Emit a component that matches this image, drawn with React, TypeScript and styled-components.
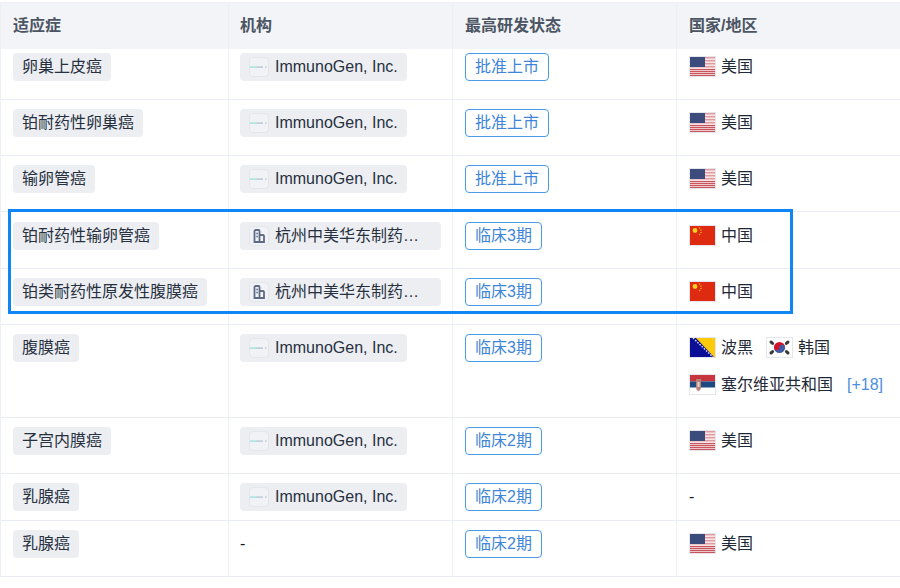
import React from "react";
import styled, { createGlobalStyle } from "styled-components";

const Global = createGlobalStyle`
  html, body { margin: 0; padding: 0; background: #fff; }
  body { font-family: "Liberation Sans", "Noto Sans CJK SC", sans-serif; font-size: 16px; color: #1f2937; }
`;
const Page = styled.div`
  position: relative;
  width: 900px;
  height: 588px;
  padding-top: 2px;
  box-sizing: border-box;
  overflow: hidden;
`;
const Table = styled.table`
  width: 900px;
  table-layout: fixed;
  border-collapse: collapse;
  border-spacing: 0;
`;
const HeadCell = styled.th`
  height: 46px;
  padding: 0 12px;
  box-sizing: border-box;
  background: #f3f4f7;
  border-top: 1px solid #eef0f5;
  border-left: 1px solid #edeff4;
  font-size: 16px;
  font-weight: 700;
  text-align: left;
  color: #4b5563;
  line-height: 22px;
`;
const OrgHead = styled(HeadCell)`
  padding-left: 11px;
`;
const Row = styled.tr<{ $tall?: boolean }>`
  border-bottom: 1px solid #eaecf3;
  &:first-child td { padding-top: 4px; }
  td { padding-top: ${(p) => (p.$tall ? "10px" : "9px")}; }
`;
const Cell = styled.td`
  padding: 9px 12px 9px;
  box-sizing: border-box;
  vertical-align: top;
  border-left: 1px solid #edeff6;
  line-height: 28px;
  color: #111827;
`;
const OrgCell = styled(Cell)`
  padding-left: 11px;
`;
const Tag = styled.span`
  display: inline-flex;
  align-items: center;
  height: 28px;
  padding: 0 9px;
  background: #eceef2;
  border-radius: 4px;
  color: #27303f;
  white-space: nowrap;
  vertical-align: top;
`;
const OrgTag = styled(Tag)<{ $long: boolean }>`
  width: ${(p) => (p.$long ? "201px" : "auto")};
  box-sizing: border-box;
  gap: 6px;
`;
const LogoBox = styled.span`
  flex: none;
  display: flex;
  align-items: center;
  justify-content: center;
  width: 20px;
  height: 20px;
  box-sizing: border-box;
  border: 1px solid #e4e6ec;
  border-radius: 4px;
  background: #f1f2f5;
`;
const Status = styled.span`
  display: inline-flex;
  align-items: center;
  height: 28px;
  box-sizing: border-box;
  padding: 0 9px;
  border: 1px solid #4a9be6;
  border-radius: 4px;
  color: #3f86d8;
  white-space: nowrap;
  vertical-align: top;
`;
const Countries = styled.div`
  display: flex;
  flex-wrap: wrap;
  column-gap: 13px;
  row-gap: 9px;
  margin-bottom: 9px;
`;
const Country = styled.span`
  display: inline-flex;
  align-items: center;
  height: 28px;
  gap: 5px;
  color: #1f2937;
  white-space: nowrap;
`;
const More = styled.span`
  margin-left: 1px;
  color: #4a8fe0;
  line-height: 28px;
`;
const FlagBox = styled.svg`
  flex: none;
  display: block;
  width: 27px;
  height: 21px;
`;
const Highlight = styled.div`
  position: absolute;
  left: 8px;
  top: 209px;
  width: 785px;
  height: 105px;
  box-sizing: border-box;
  border: 3px solid #0f86f5;
  pointer-events: none;
`;

const frame = <rect x="0.5" y="0.5" width="26" height="20" fill="none" stroke="#e4e6ec" />;

const US = () => (
  <FlagBox viewBox="0 0 27 21">
    <rect x="1" y="1" width="25" height="19" fill="#f7e3e3" />
    {[1, 4, 7, 10, 13, 15, 17, 19].map((y, i) => (
      <rect key={y} x="1" y={y} width="25" height={i > 3 ? 1.2 : 1.4} fill={i > 3 ? "#c9565e" : "#e09ba0"} />
    ))}
    <rect x="1" y="1" width="15" height="10" fill="#3b4c7c" />
    {frame}
  </FlagBox>
);
const CN = () => (
  <FlagBox viewBox="0 0 27 21">
    <rect x="1" y="1" width="25" height="19" fill="#de2a10" />
    <circle cx="6" cy="5.5" r="2.4" fill="#f8d020" />
    <circle cx="10.5" cy="3" r=".8" fill="#f3a818" />
    <circle cx="12" cy="5" r=".8" fill="#f3a818" />
    <circle cx="12" cy="7.5" r=".8" fill="#f3a818" />
    <circle cx="10.5" cy="9.5" r=".8" fill="#f3a818" />
    {frame}
  </FlagBox>
);
const BA = () => (
  <FlagBox viewBox="0 0 27 21">
    <rect x="1" y="1" width="25" height="19" fill="#0a0f96" />
    <path d="M7 1H26V20H25Z" fill="#fdcb0a" />
    <path d="M4 1L24 20" stroke="#dfe2f5" strokeWidth="1.4" strokeDasharray="1.6 1.4" />
    {frame}
  </FlagBox>
);
const KR = () => (
  <FlagBox viewBox="0 0 27 21">
    <rect x="1" y="1" width="25" height="19" fill="#fff" />
    <path d="M8 10.5a5.5 5.5 0 0 1 11 0Z" fill="#cf142b" />
    <path d="M8 10.5a5.5 5.5 0 0 0 11 0Z" fill="#3e5ba6" />
    <circle cx="10.750" cy="10.5" r="2.750" fill="#cf142b" />
    <circle cx="16.250" cy="10.5" r="2.750" fill="#3e5ba6" />
    <g stroke="#3a3a3a" strokeWidth="3" strokeLinecap="round">
      <path d="M5 5l1.6 1.4" />
      <path d="M22 5l-1.6 1.4" />
      <path d="M5 16l1.6-1.4" />
      <path d="M22 16l-1.6-1.4" />
    </g>
    {frame}
  </FlagBox>
);
const RS = () => (
  <FlagBox viewBox="0 0 27 21">
    <rect x="1" y="1" width="25" height="6.4" fill="#c6363c" />
    <rect x="1" y="7.4" width="25" height="6.3" fill="#1f4a80" />
    <rect x="1" y="13.7" width="25" height="6.3" fill="#fff" />
    <path d="M7 5h5v8q0 3-2.500 4q-2.500-1-2.500-4Z" fill="#b8827c" />
    <rect x="8.500" y="8" width="2" height="5" fill="#e8d4c8" />
    {frame}
  </FlagBox>
);

const flags: Record<string, React.FC> = { 美国: US, 中国: CN, 波黑: BA, 韩国: KR, 塞尔维亚共和国: RS };

const ImmunoLogo = () => (
  <LogoBox>
    <svg width="18" height="4" viewBox="0 0 18 4">
      <rect x="0" y="1.500" width="6" height="1.200" fill="#8fe0dc" />
      <rect x="6" y="1.500" width="7" height="1.200" fill="#aebfc9" />
      <rect x="15" y="1.500" width="1.500" height="1.200" fill="#b4c4cc" />
    </svg>
  </LogoBox>
);
const BuildingLogo = () => (
  <LogoBox>
    <svg width="12" height="14" viewBox="0 0 12 14" fill="none" stroke="#5d6b85" strokeWidth="1.800">
      <path d="M1.500 13V2a1 1 0 0 1 1-1h3a1 1 0 0 1 1 1v11Z" />
      <path d="M6.500 6H10a1 1 0 0 1 1 1v6H1.500" />
      <path d="M3.300 4.500h1.600M3.300 7.500h1.600" strokeWidth="1.300" />
    </svg>
  </LogoBox>
);

const Org = ({ name }: { name: string }) => {
  if (!name) return <>-</>;
  const isImmuno = name.startsWith("Immuno");
  return (
    <OrgTag $long={!isImmuno}>
      {isImmuno ? <ImmunoLogo /> : <BuildingLogo />}
      {name}
    </OrgTag>
  );
};

const IG = "ImmunoGen, Inc.";
const HZ = "杭州中美华东制药…";

const rows: { ind: string; org: string; status: string; lines: string[][]; more?: string }[] = [
  { ind: "卵巢上皮癌", org: IG, status: "批准上市", lines: [["美国"]] },
  { ind: "铂耐药性卵巢癌", org: IG, status: "批准上市", lines: [["美国"]] },
  { ind: "输卵管癌", org: IG, status: "批准上市", lines: [["美国"]] },
  { ind: "铂耐药性输卵管癌", org: HZ, status: "临床3期", lines: [["中国"]] },
  { ind: "铂类耐药性原发性腹膜癌", org: HZ, status: "临床3期", lines: [["中国"]] },
  { ind: "腹膜癌", org: IG, status: "临床3期", lines: [["波黑", "韩国"], ["塞尔维亚共和国"]], more: "[+18]" },
  { ind: "子宫内膜癌", org: IG, status: "临床2期", lines: [["美国"]] },
  { ind: "乳腺癌", org: IG, status: "临床2期", lines: [] },
  { ind: "乳腺癌", org: "", status: "临床2期", lines: [["美国"]] },
];

export default function App() {
  return (
    <Page>
      <Global />
      <Table>
        <colgroup>
          <col style={{ width: 228 }} />
          <col style={{ width: 224 }} />
          <col style={{ width: 224 }} />
          <col />
        </colgroup>
        <thead>
          <tr>
            <HeadCell>适应症</HeadCell>
            <OrgHead>机构</OrgHead>
            <HeadCell>最高研发状态</HeadCell>
            <HeadCell>国家/地区</HeadCell>
          </tr>
        </thead>
        <tbody>
          {rows.map((r, i) => (
            <Row key={i} $tall={i === 3}>
              <Cell><Tag>{r.ind}</Tag></Cell>
              <OrgCell><Org name={r.org} /></OrgCell>
              <Cell><Status>{r.status}</Status></Cell>
              <Cell>
                {r.lines.length === 0
                  ? "-"
                  : r.lines.map((line, j) => (
                      <Countries key={j}>
                        {line.map((c) => {
                          const F = flags[c];
                          return (
                            <Country key={c}>
                              <F />
                              {c}
                            </Country>
                          );
                        })}
                        {j === r.lines.length - 1 && r.more ? <More>{r.more}</More> : null}
                      </Countries>
                    ))}
              </Cell>
            </Row>
          ))}
        </tbody>
      </Table>
      <Highlight />
    </Page>
  );
}
